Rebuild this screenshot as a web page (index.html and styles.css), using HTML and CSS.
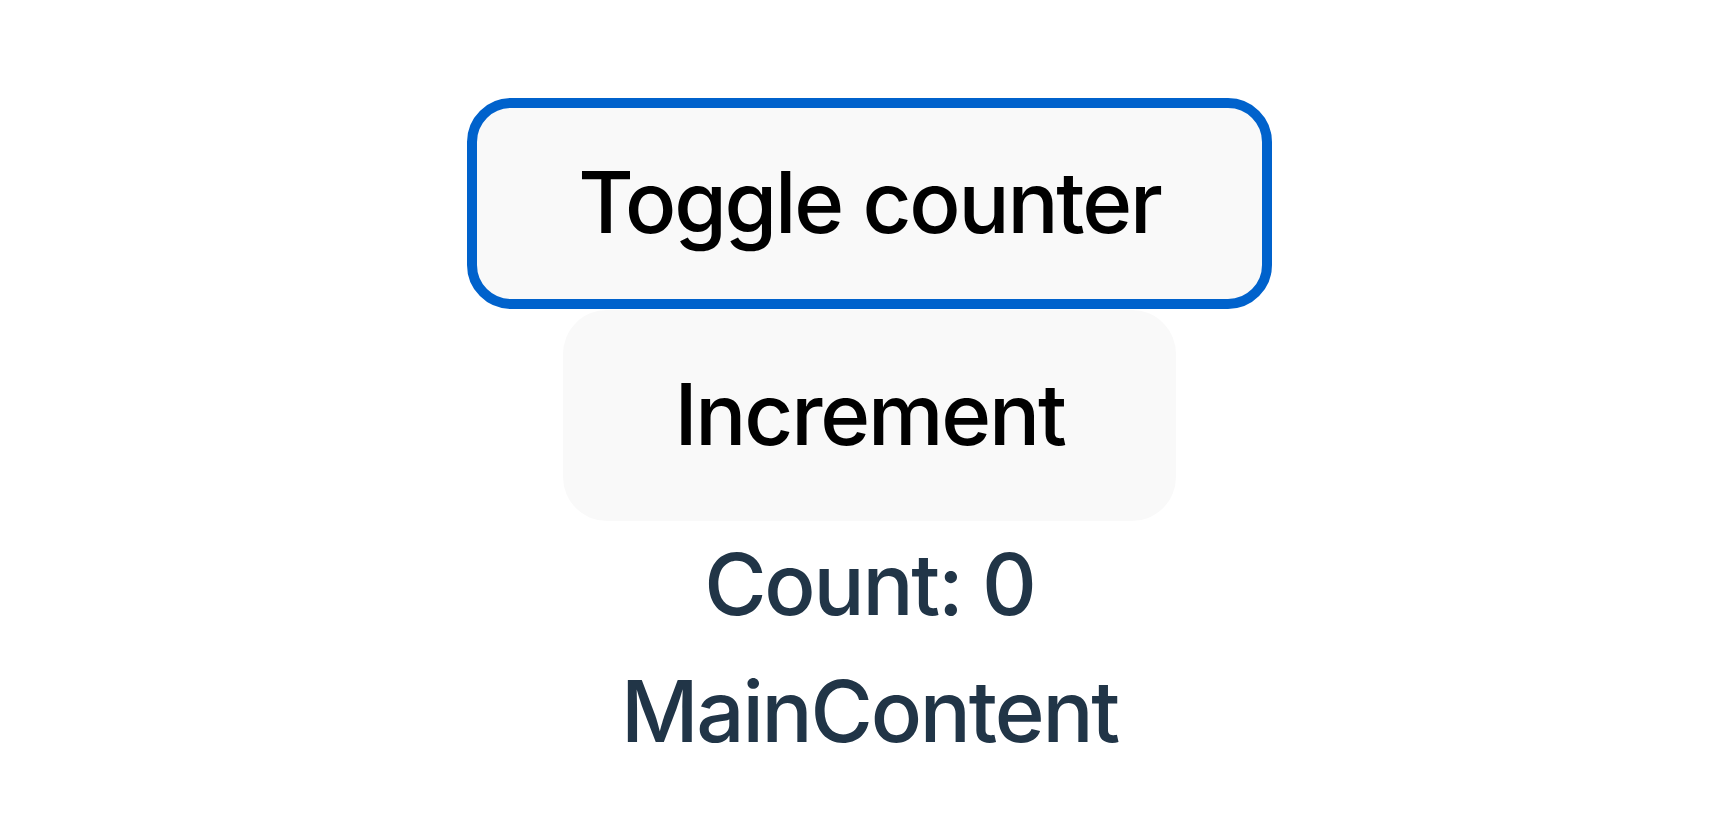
FILE: index.html
```html
<!DOCTYPE html>
<html lang="en">
<head>
<meta charset="utf-8">
<title>Counter</title>
<link rel="stylesheet" href="styles.css">
</head>
<body>
<div id="app" class="app">
  <button class="btn btn-focused" type="button">Toggle counter</button>
  <button class="btn" type="button">Increment</button>
  <div class="count">Count: 0</div>
  <div class="main-content">MainContent</div>
</div>
</body>
</html>
```
FILE: styles.css
```css
html, body {
  margin: 0;
  padding: 0;
  background: #ffffff;
}

body {
  font-family: Inter, "Noto Sans", sans-serif;
  font-size: 85px;
  font-weight: 500;
  line-height: 1.5;
  letter-spacing: -2.2px;
  color: #213547;
}

.app {
  display: flex;
  flex-direction: column;
  align-items: center;
  padding-top: 98px;
  padding-left: 7px;
  text-align: center;
}

.btn {
  font-family: inherit;
  font-size: 85px;
  line-height: 1.21;
  letter-spacing: -2.2px;
  font-weight: 500;
  color: #000000;
  background: #f9f9f9;
  border: 10px solid transparent;
  border-radius: 44px;
  padding: 44px 101px;
  margin: 0;
  cursor: pointer;
}

.btn-focused {
  border-color: #0062cc;
  margin-bottom: 1px;
}

.count,
.main-content {
  margin: 0;
}
```
